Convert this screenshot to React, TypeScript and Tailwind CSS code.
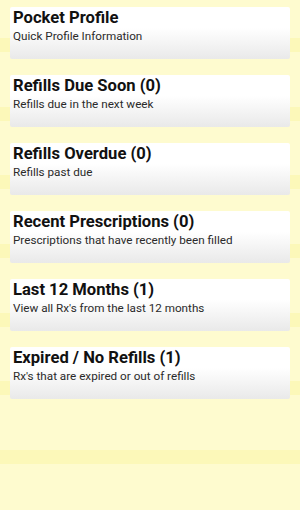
import React from "react";

const items = [
  { title: "Pocket Profile", sub: "Quick Profile Information" },
  { title: "Refills Due Soon (0)", sub: "Refills due in the next week" },
  { title: "Refills Overdue (0)", sub: "Refills past due" },
  { title: "Recent Prescriptions (0)", sub: "Prescriptions that have recently been filled" },
  { title: "Last 12 Months (1)", sub: "View all Rx's from the last 12 months" },
  { title: "Expired / No Refills (1)", sub: "Rx's that are expired or out of refills" },
];

export default function App() {
  return (
    <div
      className="w-[300px] h-[510px] overflow-hidden bg-[repeating-linear-gradient(to_bottom,#fefbcf_0px,#fefbcf_38px,#fcf8b9_38px,#fcf8b9_52px,#fefbcf_52px,#fefbcf_68.67px)] font-['Roboto',sans-serif]"
    >
      <div className="flex flex-col gap-[16px] pt-[7px] px-[10px]">
        {items.map((it) => (
          <div
            key={it.title}
            className="h-[52px] rounded-[2px] bg-gradient-to-b from-[#ffffff] from-40% to-[#e9e9e9] px-[3px] pt-[2px]"
          >
            <div className="text-[16.6px] leading-[18px] font-bold text-[#111111] whitespace-nowrap">
              {it.title}
            </div>
            <div className="mt-[3px] text-[11.7px] leading-[13px] text-[#2a2a2a] whitespace-nowrap">
              {it.sub}
            </div>
          </div>
        ))}
      </div>
    </div>
  );
}
